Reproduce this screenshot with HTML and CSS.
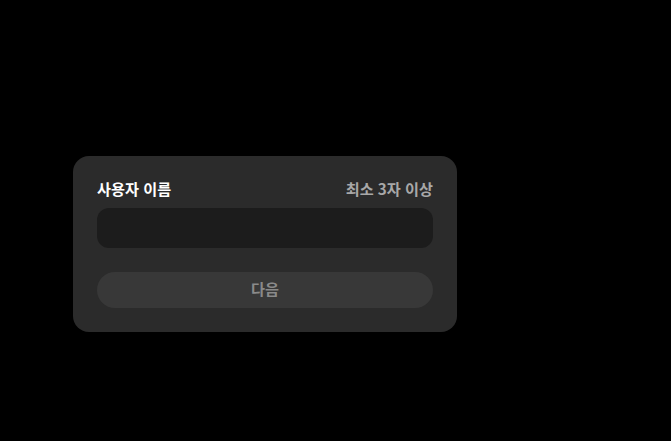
FILE: index.html
```html
<!DOCTYPE html>
<html lang="ko">
<head>
<meta charset="utf-8">
<link rel="stylesheet" href="styles.css">
</head>
<body>
<div class="page">
  <form class="card">
    <div class="label-row">
      <label class="label" for="username">사용자 이름</label>
      <span class="hint">최소 3자 이상</span>
    </div>
    <input class="input" id="username" type="text">
    <button class="btn" type="button" disabled>다음</button>
  </form>
</div>
</body>
</html>
```
FILE: styles.css
```css
html, body {
  margin: 0;
  padding: 0;
  background: #000;
  height: 100%;
}
body {
  font-family: "Noto Sans CJK KR", "Noto Sans", sans-serif;
}
.page {
  padding-top: 156px;
  padding-left: 73px;
}
.card {
  box-sizing: border-box;
  width: 384px;
  background: #2b2b2b;
  border-radius: 16px;
  padding: 24px;
  display: flex;
  flex-direction: column;
  margin: 0;
}
.label-row {
  box-sizing: border-box;
  display: flex;
  justify-content: space-between;
  align-items: center;
  height: 20px;
  padding-bottom: 3px;
  margin-bottom: 8px;
}
.label {
  color: #fff;
  font-size: 15.2px;
  font-weight: 700;
  line-height: 17px;
}
.hint {
  color: #a8a8a8;
  font-size: 15.2px;
  font-weight: 700;
  line-height: 17px;
}
.input {
  box-sizing: border-box;
  height: 40px;
  width: 100%;
  border: none;
  outline: none;
  border-radius: 12px;
  background: #1c1c1c;
  color: #fff;
  padding: 0 14px;
  font-family: inherit;
  font-size: 14px;
  margin: 0 0 24px 0;
}
.btn {
  box-sizing: border-box;
  height: 36px;
  width: 100%;
  border: none;
  border-radius: 18px;
  background: #383838;
  color: #8a8a8a;
  font-family: inherit;
  font-size: 15.2px;
  font-weight: 700;
  line-height: 17px;
  padding: 0 0 3px 0;
}
```
